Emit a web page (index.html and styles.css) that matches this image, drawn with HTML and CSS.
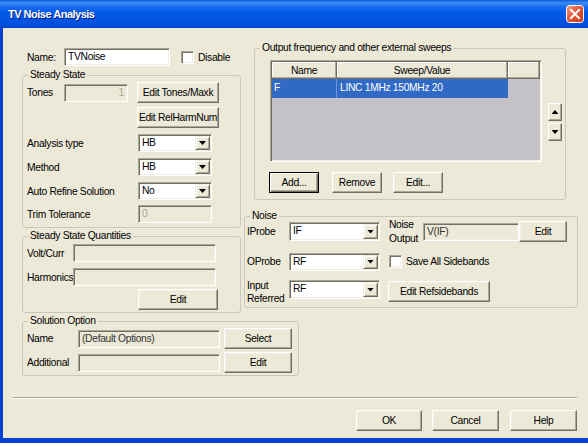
FILE: index.html
```html
<!DOCTYPE html>
<html>
<head>
<meta charset="utf-8">
<title>TV Noise Analysis</title>
<link rel="stylesheet" href="styles.css">
</head>
<body>
<div class="window">
  <div class="titlebar">
    <span class="title">TV Noise Analysis</span>
    <span class="close">
      <svg width="18" height="18" viewBox="0 0 18 18">
        <defs>
          <linearGradient id="cg" x1="0" y1="0" x2="1" y2="1">
            <stop offset="0" stop-color="#F3A18B"/>
            <stop offset="0.45" stop-color="#E2583C"/>
            <stop offset="1" stop-color="#C23A17"/>
          </linearGradient>
        </defs>
        <rect x="0.5" y="0.5" width="17" height="17" rx="3" fill="url(#cg)" stroke="#fff"/>
        <path d="M5 5 L13 13 M13 5 L5 13" stroke="#fff" stroke-width="2" stroke-linecap="square"/>
      </svg>
    </span>
  </div>
  <div class="client">
    <div class="main">
      <div class="col-left">
        <div class="name-row">
          <span class="lbl w37">Name:</span>
          <div class="field w106">TVNoise</div>
          <span class="check ml11"></span>
          <span class="ml4">Disable</span>
        </div>

        <fieldset class="gb gb-left gb-ss">
          <legend>Steady State</legend>
          <div class="gb-body pl4 pb4">
            <div class="row h21 mt1">
              <span class="lbl w37">Tones</span>
              <div class="field dis num w64">1</div>
              <div class="btn w82 ml9">Edit Tones/Maxk</div>
            </div>
            <div class="row h21 mt4">
              <div class="btn w82 ml110">Edit RelHarmNum</div>
            </div>
            <div class="row h18 mt6">
              <span class="lbl w111">Analysis type</span>
              <div class="select w74"><span class="val">HB</span><span class="drop"></span></div>
            </div>
            <div class="row h18 mt6">
              <span class="lbl w111">Method</span>
              <div class="select w74"><span class="val">HB</span><span class="drop"></span></div>
            </div>
            <div class="row h18 mt6">
              <span class="lbl w111">Auto Refine Solution</span>
              <div class="select w74"><span class="val">No</span><span class="drop"></span></div>
            </div>
            <div class="row h18 mt5">
              <span class="lbl w111">Trim Tolerance</span>
              <div class="field dis w74">0</div>
            </div>
          </div>
        </fieldset>

        <fieldset class="gb gb-left gb-ssq">
          <legend>Steady State Quantities</legend>
          <div class="gb-body pl4 pb2">
            <div class="row h18 mt2">
              <span class="lbl w46">Volt/Curr</span>
              <div class="field dis w143"></div>
            </div>
            <div class="row h18 mt6">
              <span class="lbl w46">Harmonics</span>
              <div class="field dis w143"></div>
            </div>
            <div class="row h21 mt3">
              <div class="btn w80 ml111">Edit</div>
            </div>
          </div>
        </fieldset>

        <fieldset class="gb gb-so">
          <legend>Solution Option</legend>
          <div class="gb-body pl4 pb2">
            <div class="row h21 mt1">
              <span class="lbl w51">Name</span>
              <div class="field ro w142">(Default Options)</div>
              <div class="btn w68 ml4">Select</div>
            </div>
            <div class="row h21 mt3">
              <span class="lbl w51">Additional</span>
              <div class="field ro w142"></div>
              <div class="btn w68 ml4">Edit</div>
            </div>
          </div>
        </fieldset>
      </div>

      <div class="col-right">
        <fieldset class="gb gb-out">
          <legend>Output frequency and other external sweeps</legend>
          <div class="gb-body pl15 pb6">
            <div class="list-area">
              <div class="list">
                <div class="list-head">
                  <span class="hc c1">Name</span>
                  <span class="hc c2">Sweep/Value</span>
                  <span class="hc c3"></span>
                </div>
                <div class="list-item sel">
                  <span class="c1 cell">F</span>
                  <span class="c2 cell">LINC 1MHz 150MHz 20</span>
                </div>
              </div>
              <div class="spin">
                <div class="spin-btn"><span class="tri-up"></span></div>
                <div class="spin-btn mt2"><span class="tri-down"></span></div>
              </div>
            </div>
            <div class="row h21 mt10">
              <div class="btn default w50 mln1">Add...</div>
              <div class="btn w50 ml13">Remove</div>
              <div class="btn w50 ml11">Edit...</div>
            </div>
          </div>
        </fieldset>

        <fieldset class="gb gb-noise">
          <legend>Noise</legend>
          <div class="gb-body pl2 pb2">
            <div class="row h21 mtn1">
              <span class="lbl w42">IProbe</span>
              <div class="select w91 h19"><span class="val">IF</span><span class="drop"></span></div>
              <span class="lbl two ml9 w34">Noise<br>Output</span>
              <div class="field ro w96">V(IF)</div>
              <div class="btn w48">Edit</div>
            </div>
            <div class="row h21 mt9">
              <span class="lbl w42">OProbe</span>
              <div class="select w91"><span class="val">RF</span><span class="drop"></span></div>
              <span class="check ml9"></span>
              <span class="ml4">Save All Sidebands</span>
            </div>
            <div class="row top h26 mt7">
              <span class="lbl two13 w42">Input<br>Referred</span>
              <div class="select w91 h19 mt1"><span class="val">RF</span><span class="drop"></span></div>
              <div class="btn w102 ml8 mt2">Edit Refsidebands</div>
            </div>
          </div>
        </fieldset>
      </div>
    </div>

    <div class="separator"></div>

    <div class="footer">
      <div class="btn w66">OK</div>
      <div class="btn w67 ml10">Cancel</div>
      <div class="btn w67 ml11">Help</div>
    </div>
  </div>
</div>
</body>
</html>
```

FILE: styles.css
```css
* { box-sizing: border-box; }
html, body { margin: 0; padding: 0; }
body {
  width: 588px;
  height: 445px;
  overflow: hidden;
  background: #fff;
  font-family: "Liberation Sans", Arial, sans-serif;
  font-size: 10.3px;
  letter-spacing: -0.32px;
  color: #000;
}

.window {
  width: 588px;
  height: 445px;
  display: flex;
  flex-direction: column;
}

.titlebar {
  height: 28px;
  flex: none;
  display: flex;
  align-items: center;
  justify-content: space-between;
  padding: 0 4px 0 8px;
  background: linear-gradient(to bottom, #0A5BD8 0%, #3D8CF5 10%, #1C6FF2 22%, #0058E6 45%, #0054E3 70%, #0050DA 90%, #0044C8 100%);
}
.title {
  color: #fff;
  font-weight: bold;
  font-size: 11px;
  letter-spacing: -0.5px;
  text-shadow: 1px 1px #0A1883;
}
.close { display: flex; width: 18px; height: 18px; }

.client {
  flex: 1;
  background: #ECE9D8;
  border-left: 3px solid #0841D0;
  border-bottom: 5px solid #0841D0;
  margin-bottom: 2px;
  display: flex;
  flex-direction: column;
}

.main { display: flex; height: 349px; margin-left: 19px; }
.col-left { width: 219px; display: flex; flex-direction: column; align-items: flex-start; }
.col-right { width: 334px; margin-left: 3px; display: flex; flex-direction: column; align-items: flex-start; }

.name-row { display: flex; align-items: center; height: 18px; margin-top: 20px; padding-left: 5px; }

/* group boxes */
.gb {
  margin: 0;
  padding: 0;
  border: 1px solid #C9C7BA;
  border-radius: 3px;
  min-width: 0;
}
.gb legend {
  margin-left: 5px;
  padding: 0 2px;
  height: 12px;
  line-height: 12px;
}
.gb-left { width: 219px; }
.gb-ss { margin-top: 3px; }
.gb-ssq { margin-top: 2px; }
.gb-so { width: 277px; margin-top: 2px; }
.gb-out { width: 312px; margin-left: 10px; margin-top: 14px; }
.gb-noise { width: 334px; margin-top: 10px; }

.gb-body { display: flex; flex-direction: column; }

.row { display: flex; align-items: center; flex: none; }
.row.top { align-items: flex-start; }

.lbl { flex: none; white-space: nowrap; }
.two { line-height: 14px; }
.two13 { line-height: 13px; }

/* text fields */
.field {
  flex: none;
  height: 18px;
  border: 1px solid;
  border-color: #ACA899 #fff #fff #ACA899;
  box-shadow: inset 1px 1px #716F64, inset -1px -1px #F1EFE2;
  background: #fff;
  padding: 0 3px;
  line-height: 16px;
  white-space: nowrap;
  overflow: hidden;
}
.field.dis { background: #ECE9D8; color: #ACA899; }
.field.ro { background: #ECE9D8; color: #333; }
.field.num { text-align: right; }

/* combo boxes */
.select {
  flex: none;
  display: flex;
  height: 18px;
  border: 1px solid;
  border-color: #ACA899 #fff #fff #ACA899;
  box-shadow: inset 1px 1px #716F64, inset -1px -1px #F1EFE2;
  background: #fff;
  padding: 1px;
}
.select .val { flex: 1; padding-left: 2px; line-height: 14px; }
.drop {
  width: 15px;
  background: #ECE9D8;
  border: 1px solid;
  border-color: #F1EFE2 #716F64 #716F64 #F1EFE2;
  box-shadow: inset 1px 1px #fff, inset -1px -1px #ACA899;
  display: flex;
  align-items: center;
  justify-content: center;
}
.drop::after {
  content: "";
  width: 7px;
  height: 4px;
  background: #000;
  clip-path: polygon(0 0, 100% 0, 50% 100%);
}

/* buttons */
.btn {
  flex: none;
  height: 21px;
  display: flex;
  align-items: center;
  justify-content: center;
  background: #ECE9D8;
  border: 1px solid;
  border-color: #fff #716F64 #716F64 #fff;
  box-shadow: inset -1px -1px #ACA899, inset 1px 1px #F1EFE2;
  white-space: nowrap;
}
.btn.default {
  border-color: #000;
  box-shadow: inset 1px 1px #fff, inset -1px -1px #716F64, inset -2px -2px #ACA899;
}

/* checkbox */
.check {
  flex: none;
  width: 13px;
  height: 13px;
  background: #fff;
  border: 1px solid;
  border-color: #ACA899 #fff #fff #ACA899;
  box-shadow: inset 1px 1px #716F64, inset -1px -1px #F1EFE2;
}

/* list view */
.list-area { display: flex; align-items: flex-start; margin-top: 6px; }
.list {
  width: 272px;
  height: 102px;
  border: 1px solid;
  border-color: #ACA899 #fff #fff #ACA899;
  box-shadow: inset 1px 1px #716F64, inset -1px -1px #F1EFE2;
  background: #C4C2C7;
  padding: 1px;
}
.list-head { display: flex; height: 17px; }
.hc {
  display: flex;
  align-items: center;
  justify-content: center;
  background: #ECE9D8;
  box-shadow: inset -1px -1px #ACA899, inset 1px 1px #fff;
  border-right: 1px solid #716F64;
  border-bottom: 1px solid #716F64;
}
.c1 { width: 65px; flex: none; }
.c2 { width: 171px; flex: none; }
.c3 { width: 32px; flex: none; }
.list-item { display: flex; height: 19px; }
.list-item.sel { width: 236px; background: #316AC5; color: #fff; }
.cell { line-height: 17px; padding-left: 2px; }
.list-item .c1 { border-right: 1px solid #6E93D6; }
.list-item .c2 { padding-left: 3px; }

.spin { display: flex; flex-direction: column; margin-left: 6px; margin-top: 43px; }
.spin-btn {
  width: 14px;
  height: 18px;
  background: #ECE9D8;
  border: 1px solid;
  border-color: #fff #716F64 #716F64 #fff;
  box-shadow: inset -1px -1px #ACA899;
  display: flex;
  align-items: center;
  justify-content: center;
}
.tri-up, .tri-down { width: 7px; height: 4px; background: #000; }
.tri-up { clip-path: polygon(50% 0, 100% 100%, 0 100%); }
.tri-down { clip-path: polygon(0 0, 100% 0, 50% 100%); }

.separator {
  width: 564px;
  height: 2px;
  margin: 20px 0 0 10px;
  border-top: 1px solid #ACA899;
  border-bottom: 1px solid #fff;
}

.footer { display: flex; justify-content: flex-end; padding-right: 11px; margin-top: 11px; }

/* sizing utilities */
.h18 { height: 18px; }
.h19 { height: 19px; }
.h21 { height: 21px; }
.h26 { height: 26px; }
.w34 { width: 34px; }
.w37 { width: 37px; }
.w42 { width: 42px; }
.w46 { width: 46px; }
.w48 { width: 48px; }
.w50 { width: 50px; }
.w51 { width: 51px; }
.w64 { width: 64px; }
.w66 { width: 66px; }
.w67 { width: 67px; }
.w68 { width: 68px; }
.w74 { width: 74px; }
.w80 { width: 80px; }
.w82 { width: 82px; }
.w91 { width: 91px; }
.w96 { width: 96px; }
.w102 { width: 102px; }
.w106 { width: 106px; }
.w111 { width: 111px; }
.w142 { width: 142px; }
.w143 { width: 143px; }

.mt1 { margin-top: 1px; }
.mt2 { margin-top: 2px; }
.mt3 { margin-top: 3px; }
.mt4 { margin-top: 4px; }
.mt5 { margin-top: 5px; }
.mt6 { margin-top: 6px; }
.mt7 { margin-top: 7px; }
.mt9 { margin-top: 9px; }
.mt10 { margin-top: 10px; }
.mtn1 { margin-top: -1px; }

.ml4 { margin-left: 4px; }
.ml8 { margin-left: 8px; }
.ml9 { margin-left: 9px; }
.ml10 { margin-left: 10px; }
.ml11 { margin-left: 11px; }
.ml13 { margin-left: 13px; }
.ml110 { margin-left: 110px; }
.ml111 { margin-left: 111px; }
.mln1 { margin-left: -1px; }

.pl2 { padding-left: 2px; }
.pl4 { padding-left: 4px; }
.pl15 { padding-left: 15px; }
.pb2 { padding-bottom: 2px; }
.pb4 { padding-bottom: 4px; }
.pb6 { padding-bottom: 6px; }
```
